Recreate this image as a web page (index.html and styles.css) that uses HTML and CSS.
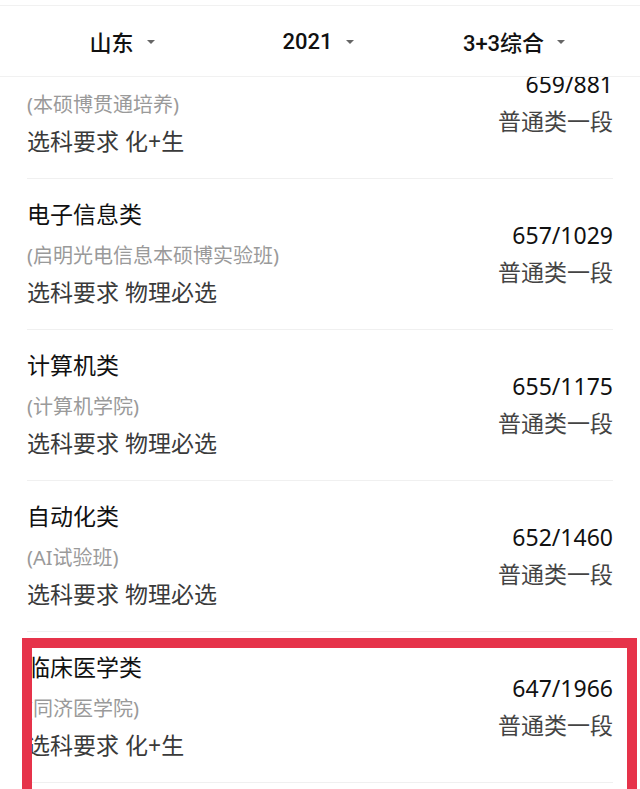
FILE: index.html
```html
<!DOCTYPE html>
<html lang="zh-CN">
<head>
<meta charset="utf-8">
<link rel="stylesheet" href="styles.css">
</head>
<body>
<div class="page">
  <header class="filter-bar">
    <div class="filter"><span>山东</span><i class="caret"></i></div>
    <div class="filter"><span>2021</span><i class="caret"></i></div>
    <div class="filter"><span>3+3综合</span><i class="caret"></i></div>
  </header>
  <div class="viewport">
    <ul class="list">
      <li class="item">
        <div class="info">
          <div class="title">计算机类</div>
          <div class="sub">(本硕博贯通培养)</div>
          <div class="req">选科要求 化+生</div>
        </div>
        <div class="score">
          <div class="rank">659/881</div>
          <div class="batch">普通类一段</div>
        </div>
      </li>
      <li class="item">
        <div class="info">
          <div class="title">电子信息类</div>
          <div class="sub">(启明光电信息本硕博实验班)</div>
          <div class="req">选科要求 物理必选</div>
        </div>
        <div class="score">
          <div class="rank">657/1029</div>
          <div class="batch">普通类一段</div>
        </div>
      </li>
      <li class="item">
        <div class="info">
          <div class="title">计算机类</div>
          <div class="sub">(计算机学院)</div>
          <div class="req">选科要求 物理必选</div>
        </div>
        <div class="score">
          <div class="rank">655/1175</div>
          <div class="batch">普通类一段</div>
        </div>
      </li>
      <li class="item">
        <div class="info">
          <div class="title">自动化类</div>
          <div class="sub">(AI试验班)</div>
          <div class="req">选科要求 物理必选</div>
        </div>
        <div class="score">
          <div class="rank">652/1460</div>
          <div class="batch">普通类一段</div>
        </div>
      </li>
      <li class="item highlighted">
        <div class="info">
          <div class="title">临床医学类</div>
          <div class="sub">(同济医学院)</div>
          <div class="req">选科要求 化+生</div>
        </div>
        <div class="score">
          <div class="rank">647/1966</div>
          <div class="batch">普通类一段</div>
        </div>
        <div class="mark"></div>
      </li>
    </ul>
  </div>
</div>
</body>
</html>
```

FILE: styles.css
```css
html, body {
  margin: 0;
  padding: 0;
  background: #ffffff;
}
body {
  font-family: "Noto Sans", "Noto Sans CJK SC", sans-serif;
  color: #111;
}
.page {
  width: 640px;
  height: 789px;
  overflow: hidden;
  display: flex;
  flex-direction: column;
  padding-top: 5px;
  box-sizing: border-box;
}
.filter-bar {
  flex: none;
  height: 70px;
  background: #fff;
  border-top: 1px solid #f1f1f1;
  border-bottom: 1px solid #f1f1f1;
  display: grid;
  grid-template-columns: repeat(3, 196px);
  padding: 0 24px;
  align-items: center;
  justify-items: center;
  font-family: Roboto, "Noto Sans CJK SC", sans-serif;
  font-size: 22px;
  font-weight: 500;
  color: #111;
}
.filter {
  display: flex;
  align-items: center;
}
.caret {
  display: block;
  width: 0;
  height: 0;
  margin-left: 13px;
  margin-top: 2px;
  border-left: 4px solid transparent;
  border-right: 4px solid transparent;
  border-top: 4px solid #666;
}
.viewport {
  flex: 1;
  overflow: hidden;
}
.list {
  list-style: none;
  margin: -49px 0 0;
  padding: 0 27px;
}
.item {
  position: relative;
  height: 150px;
  border-bottom: 1px solid #f0f0f0;
  display: flex;
  justify-content: space-between;
  align-items: center;
}
.info {
  align-self: flex-start;
  padding-top: 17px;
}
.title {
  font-size: 23px;
  line-height: 37px;
  color: #111;
}
.sub {
  font-size: 20px;
  line-height: 37px;
  margin-top: 4px;
  color: #9a9a9a;
}
.req {
  font-size: 23px;
  line-height: 37px;
  color: #3a3a3a;
}
.score {
  text-align: right;
  font-size: 23px;
  line-height: 37px;
}
.rank {
  color: #111;
}
.batch {
  color: #444;
}
.mark {
  position: absolute;
  left: -5px;
  right: -24px;
  top: 6px;
  height: 200px;
  border: 10px solid #e6334a;
  border-bottom: none;
  box-sizing: border-box;
  z-index: 1;
}
```
